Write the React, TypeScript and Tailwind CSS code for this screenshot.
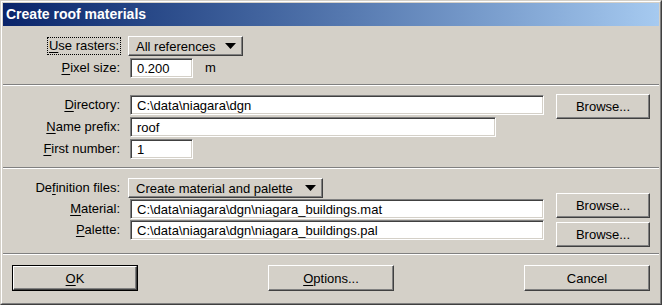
import React from 'react';

const raised =
  'border border-t-white border-l-white border-r-[#404040] border-b-[#404040] shadow-[inset_-1px_-1px_0_#808080]';
const sunken =
  'border border-t-[#808080] border-l-[#808080] border-r-white border-b-white shadow-[inset_1px_1px_0_#404040,inset_-1px_-1px_0_#d4d0c8] bg-white';

function Acc({ k }: { k: string }) {
  return <span className="underline underline-offset-2">{k}</span>;
}

function Label({ children }: { children: React.ReactNode }) {
  return <div className="w-[118px] shrink-0 text-right pr-[1px]">{children}</div>;
}

function Field({ value, w }: { value: string; w: string }) {
  return (
    <div className={`${sunken} ${w} h-[20px] flex items-center pl-[6px] leading-none`}>
      {value}
    </div>
  );
}

function Option({ text, w }: { text: string; w: string }) {
  return (
    <div className={`${raised} ${w} h-[20px] flex items-center justify-between pl-[7px] pr-[6px] leading-none`}>
      <span>{text}</span>
      <svg width="11" height="6" viewBox="0 0 11 6">
        <polygon points="0,0 11,0 5.5,6" fill="#000" />
      </svg>
    </div>
  );
}

function Btn({ children, w = 'w-[94px]', h = 'h-[25px]' }: { children: React.ReactNode; w?: string; h?: string }) {
  return (
    <div className={`${raised} ${w} ${h} flex items-center justify-center leading-none`}>{children}</div>
  );
}

function Sep() {
  return <div className="h-[2px] border-t border-t-[#808080] border-b border-b-white" />;
}

export default function App() {
  return (
    <div
      className="w-[662px] h-[305px] bg-[#d4d0c8] border border-t-[#d4d0c8] border-l-[#d4d0c8] border-r-[#404040] border-b-[#404040] text-[13px] text-black"
      style={{ fontFamily: '"Liberation Sans", Arial, sans-serif' }}
    >
      <div className="h-full border border-t-white border-l-white border-r-[#808080] border-b-[#808080] p-[1px] flex flex-col">
        <div className="h-[23px] shrink-0 bg-linear-to-r from-[#0a246a] to-[#a6caf0] text-white font-bold text-[14px] flex items-center pl-[3px]">
          Create roof materials
        </div>

        {/* rasters */}
        <div className="flex flex-col gap-[2px] pt-[10px]">
          <div className="flex items-center">
            <div className="w-[118px] shrink-0 flex justify-end">
              <span className="border border-dotted border-black px-[1px] leading-[16px]">
                <Acc k="U" />se rasters:
              </span>
            </div>
            <div className="ml-[7px]">
              <Option text="All references" w="w-[115px]" />
            </div>
          </div>
          <div className="flex items-center">
            <Label>
              <Acc k="P" />ixel size:
            </Label>
            <div className="ml-[9px]">
              <Field value="0.200" w="w-[63px]" />
            </div>
            <span className="ml-[12px]">m</span>
          </div>
        </div>
        <div className="mt-[6px]">
          <Sep />
        </div>

        {/* directory */}
        <div className="flex">
          <div className="flex-1 flex flex-col gap-[2px] pt-[9px]">
            <div className="flex items-center">
              <Label>
                <Acc k="D" />irectory:
              </Label>
              <div className="ml-[9px]">
                <Field value="C:\data\niagara\dgn" w="w-[414px]" />
              </div>
            </div>
            <div className="flex items-center">
              <Label>
                <Acc k="N" />ame prefix:
              </Label>
              <div className="ml-[9px]">
                <Field value="roof" w="w-[366px]" />
              </div>
            </div>
            <div className="flex items-center">
              <Label>
                <Acc k="F" />irst number:
              </Label>
              <div className="ml-[9px]">
                <Field value="1" w="w-[63px]" />
              </div>
            </div>
          </div>
          <div className="pt-[8px] pr-[9px]">
            <Btn>Browse...</Btn>
          </div>
        </div>
        <div className="mt-[8px]">
          <Sep />
        </div>

        {/* definition files */}
        <div className="flex">
          <div className="flex-1 flex flex-col gap-[1px] pt-[9px]">
            <div className="flex items-center">
              <Label>
                De<Acc k="f" />inition files:
              </Label>
              <div className="ml-[7px]">
                <Option text="Create material and palette" w="w-[195px]" />
              </div>
            </div>
            <div className="flex items-center">
              <Label>
                <Acc k="M" />aterial:
              </Label>
              <div className="ml-[9px]">
                <Field value="C:\data\niagara\dgn\niagara_buildings.mat" w="w-[414px]" />
              </div>
            </div>
            <div className="flex items-center">
              <Label>
                <Acc k="P" />alette:
              </Label>
              <div className="ml-[9px]">
                <Field value="C:\data\niagara\dgn\niagara_buildings.pal" w="w-[414px]" />
              </div>
            </div>
          </div>
          <div className="pt-[24px] pr-[9px] flex flex-col gap-[4px]">
            <Btn>Browse...</Btn>
            <Btn>Browse...</Btn>
          </div>
        </div>
        <div className="mt-[6px]">
          <Sep />
        </div>

        {/* buttons */}
        <div className="flex justify-between px-[9px] pt-[10px]">
          <div className="border border-black">
            <Btn w="w-[124px]" h="h-[24px]">
              <Acc k="O" />K
            </Btn>
          </div>
          <Btn w="w-[126px]" h="h-[26px]">
            <Acc k="O" />ptions...
          </Btn>
          <Btn w="w-[126px]" h="h-[26px]">
            Cancel
          </Btn>
        </div>
      </div>
    </div>
  );
}
